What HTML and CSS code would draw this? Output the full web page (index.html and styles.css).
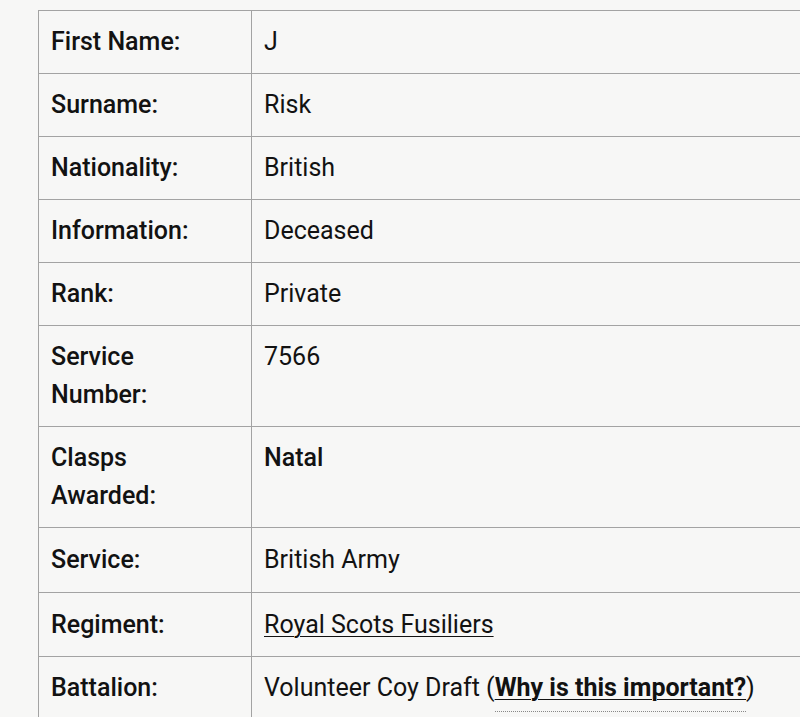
FILE: index.html
```html
<!DOCTYPE html>
<html lang="en">
<head>
<meta charset="utf-8">
<title>Record</title>
<link rel="stylesheet" href="styles.css">
</head>
<body>
<div class="page">
<table class="record">
  <tr><th>First Name:</th><td>J</td></tr>
  <tr><th>Surname:</th><td>Risk</td></tr>
  <tr><th>Nationality:</th><td>British</td></tr>
  <tr><th>Information:</th><td>Deceased</td></tr>
  <tr><th>Rank:</th><td>Private</td></tr>
  <tr><th>Service<br>Number:</th><td>7566</td></tr>
  <tr><th>Clasps<br>Awarded:</th><td><span class="strong">Natal</span></td></tr>
  <tr><th>Service:</th><td>British Army</td></tr>
  <tr><th>Regiment:</th><td><a class="link" href="#">Royal Scots Fusiliers</a></td></tr>
  <tr class="last"><th>Battalion:</th><td>Volunteer Coy Draft (<a class="why" href="#">Why is this important?</a>)</td></tr>
</table>
</div>
</body>
</html>
```

FILE: styles.css
```css
html, body {
  margin: 0;
  padding: 0;
  background: #f7f7f6;
  overflow: hidden;
  height: 717px;
}
.page {
  padding: 10px 0 0 38px;
}
.record {
  border-collapse: collapse;
  width: 800px;
  font-family: Roboto, "Liberation Sans", sans-serif;
  font-size: 25px;
  line-height: 38px;
  color: #121212;
}
.record th, .record td {
  border: 1px solid #a3a3a3;
  padding: 12px;
  text-align: left;
  vertical-align: top;
}
.record th {
  width: 188px;
  font-weight: 500;
}
.record td {
  font-weight: 400;
  border-right: none;
}
.record tr:nth-child(8) th, .record tr:nth-child(8) td {
  padding-top: 13px;
  padding-bottom: 13px;
}
.record tr:nth-child(9) th, .record tr:nth-child(9) td {
  padding-top: 13px;
}
.record .last th, .record .last td {
  padding-bottom: 30px;
}
.strong {
  font-weight: 500;
}
.link {
  color: #121212;
  text-decoration: underline;
  text-underline-offset: 3px;
  text-decoration-thickness: 1px;
}
.why {
  color: #121212;
  font-weight: 700;
  text-decoration: underline;
  text-underline-offset: 3px;
  text-decoration-thickness: 1px;
  border-bottom: 1px dotted #888;
  padding-bottom: 9px;
}
```
